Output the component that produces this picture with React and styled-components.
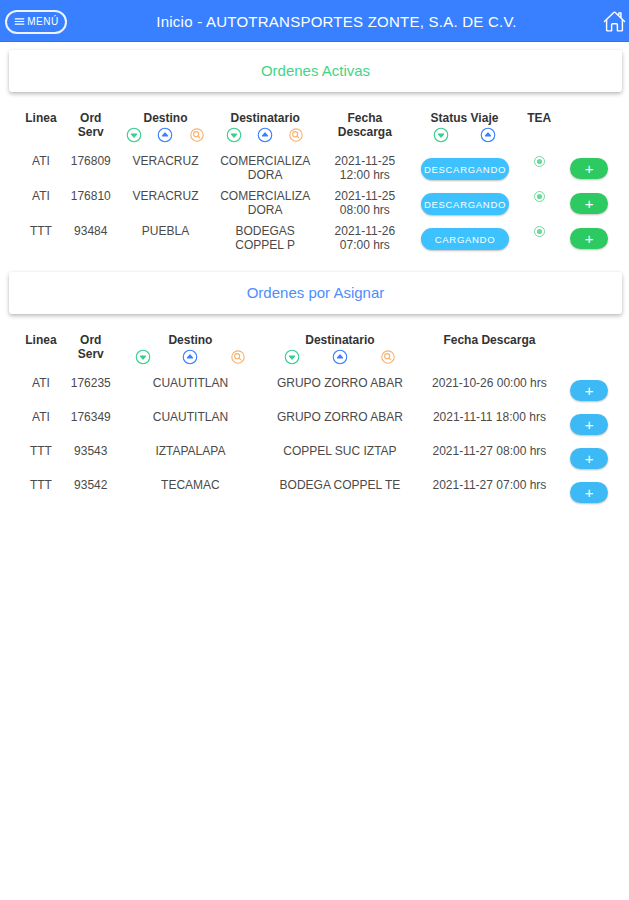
import styled, { createGlobalStyle } from 'styled-components';
import {
  IoCaretDownCircleOutline,
  IoCaretUpCircleOutline,
  IoHomeOutline,
  IoMenu,
  IoSearchCircleOutline,
} from 'react-icons/io5';

const GlobalStyle = createGlobalStyle`
  html, body {
    margin: 0;
    background: #fff;
    font-family: "Liberation Sans", Arial, sans-serif;
  }
`;

const Page = styled.div`
  width: 629px;
  height: 900px;
  overflow: hidden;
  background: #fff;
`;

const Toolbar = styled.header`
  display: flex;
  align-items: center;
  height: 42px;
  padding: 2px 3px 0 5px;
  box-sizing: border-box;
  background: #3880ff;
  border-bottom: 1px solid #2f74ec;
  color: #fff;
`;

const MenuButton = styled.button`
  display: flex;
  align-items: center;
  justify-content: center;
  gap: 1px;
  width: 62px;
  height: 24px;
  padding: 0;
  box-sizing: border-box;
  background: transparent;
  border: 2px solid #eef3ff;
  border-radius: 12px;
  color: #fff;
  font: 400 10px "Liberation Sans", Arial, sans-serif;
  letter-spacing: 0.5px;
`;

const Title = styled.h1`
  flex: 1;
  margin: 0;
  padding-left: 3px;
  text-align: center;
  font-size: 15px;
  font-weight: 400;
  letter-spacing: 0.24px;
`;

const HomeButton = styled.span`
  display: flex;
  font-size: 23px;
`;

const Card = styled.div`
  display: flex;
  align-items: center;
  justify-content: center;
  height: 42px;
  padding-bottom: 2px;
  box-sizing: border-box;
  margin: ${(p) => p.$top}px 7px 0 9px;
  background: #fff;
  border-radius: 3px;
  box-shadow: 0 2px 4px rgba(0, 0, 0, 0.26), 0 0 3px rgba(0, 0, 0, 0.05);
  color: ${(p) => p.$color};
  font-size: 15px;
`;

const Table = styled.section`
  margin: 19px 15px 0 16px;
`;

const Row = styled.div`
  display: grid;
  grid-template-columns: ${(p) => p.$cols};
  height: ${(p) => p.$height}px;
  box-sizing: border-box;
`;

const HeadCell = styled.div`
  padding: 0 ${(p) => p.$inset || 3}px;
  min-width: 0;
  text-align: center;
  font-size: 12px;
  font-weight: 700;
  line-height: 14px;
  color: #333;
`;

const SortIcons = styled.div`
  display: flex;
  justify-content: space-around;
  margin-top: 1px;
  font-size: 18px;
  line-height: 0;
`;

const SortIcon = styled.span`
  display: flex;
  color: ${(p) => p.$color};
`;

const Cell = styled.div`
  padding: 5px ${(p) => p.$inset || 3}px 0;
  min-width: 0;
  text-align: center;
  font-size: 12px;
  line-height: 14px;
  color: #4a4a4a;
  overflow-wrap: anywhere;
`;

const StatusButton = styled.span`
  display: flex;
  align-items: center;
  justify-content: center;
  height: 22px;
  margin: 9px 5px 0 6px;
  border-radius: 11px;
  background: #3dc2ff;
  box-shadow: 0 1px 2px rgba(0, 0, 0, 0.25);
  color: #fff;
  font-size: 9.5px;
  letter-spacing: 0.7px;
  white-space: nowrap;
`;

const AddButton = styled.span`
  display: flex;
  align-items: center;
  justify-content: center;
  width: 38px;
  height: 21px;
  margin: 9px 0 0 6px;
  border-radius: 11px;
  background: ${(p) => p.$color};
  box-shadow: 0 1px 2px rgba(0, 0, 0, 0.25);
  color: #fff;
  font-size: 15px;
  line-height: 1;
`;

const TeaIcon = styled.span`
  display: flex;
  justify-content: center;
  padding-top: 1px;
  color: #6fd89b;
`;

const GREEN = '#35cf8e';
const BLUE = '#3880ff';
const ORANGE = '#f7b26f';

const sortIcons = [
  [IoCaretDownCircleOutline, GREEN],
  [IoCaretUpCircleOutline, BLUE],
  [IoSearchCircleOutline, ORANGE],
];

const Sort = ({ count = 3 }) => (
  <SortIcons>
    {sortIcons.slice(0, count).map(([Icon, color]) => (
      <SortIcon key={color} $color={color}>
        <Icon />
      </SortIcon>
    ))}
  </SortIcons>
);

const RadioOn = () => (
  <svg width="13" height="13" viewBox="0 0 13 13">
    <circle cx="6.5" cy="6.5" r="5" fill="none" stroke="currentColor" strokeWidth="1" />
    <circle cx="6.5" cy="6.5" r="2.6" fill="currentColor" />
  </svg>
);

const activeCols = '1fr 1fr 2fr 2fr 2fr 2fr 1fr 1fr';
const pendingCols = '1fr 1fr 3fr 3fr 3fr 1fr';

const activeOrders = [
  ['ATI', '176809', 'VERACRUZ', 'COMERCIALIZADORA', '2021-11-25 12:00 hrs', 'DESCARGANDO'],
  ['ATI', '176810', 'VERACRUZ', 'COMERCIALIZADORA', '2021-11-25 08:00 hrs', 'DESCARGANDO'],
  ['TTT', '93484', 'PUEBLA', 'BODEGAS COPPEL P', '2021-11-26 07:00 hrs', 'CARGANDO'],
];

const pendingOrders = [
  ['ATI', '176235', 'CUAUTITLAN', 'GRUPO ZORRO ABAR', '2021-10-26 00:00 hrs'],
  ['ATI', '176349', 'CUAUTITLAN', 'GRUPO ZORRO ABAR', '2021-11-11 18:00 hrs'],
  ['TTT', '93543', 'IZTAPALAPA', 'COPPEL SUC IZTAP', '2021-11-27 08:00 hrs'],
  ['TTT', '93542', 'TECAMAC', 'BODEGA COPPEL TE', '2021-11-27 07:00 hrs'],
];

const App = () => (
  <Page>
    <GlobalStyle />
    <Toolbar>
      <MenuButton>
        <IoMenu size={13} />
        MENÚ
      </MenuButton>
      <Title>Inicio - AUTOTRANSPORTES ZONTE, S.A. DE C.V.</Title>
      <HomeButton>
        <IoHomeOutline />
      </HomeButton>
    </Toolbar>

    <Card $top={8} $color="#45d483">Ordenes Activas</Card>
    <Table>
      <Row $cols={activeCols} $height={38}>
        <HeadCell>Linea</HeadCell>
        <HeadCell>Ord<br />Serv</HeadCell>
        <HeadCell>Destino<Sort /></HeadCell>
        <HeadCell>Destinatario<Sort /></HeadCell>
        <HeadCell $inset={14}>Fecha Descarga</HeadCell>
        <HeadCell>Status Viaje<Sort count={2} /></HeadCell>
        <HeadCell>TEA</HeadCell>
        <HeadCell />
      </Row>
      {activeOrders.map(([linea, ord, destino, destinatario, fecha, status]) => (
        <Row key={ord} $cols={activeCols} $height={35}>
          <Cell>{linea}</Cell>
          <Cell>{ord}</Cell>
          <Cell>{destino}</Cell>
          <Cell>{destinatario}</Cell>
          <Cell $inset={14}>{fecha}</Cell>
          <div><StatusButton>{status}</StatusButton></div>
          <Cell><TeaIcon><RadioOn /></TeaIcon></Cell>
          <div><AddButton $color="#2dc961">+</AddButton></div>
        </Row>
      ))}
    </Table>

    <Card $top={18} $color="#4d8dff">Ordenes por Asignar</Card>
    <Table>
      <Row $cols={pendingCols} $height={38}>
        <HeadCell>Linea</HeadCell>
        <HeadCell>Ord<br />Serv</HeadCell>
        <HeadCell>Destino<Sort /></HeadCell>
        <HeadCell>Destinatario<Sort /></HeadCell>
        <HeadCell>Fecha Descarga</HeadCell>
        <HeadCell />
      </Row>
      {pendingOrders.map(([linea, ord, destino, destinatario, fecha]) => (
        <Row key={ord} $cols={pendingCols} $height={34}>
          <Cell>{linea}</Cell>
          <Cell>{ord}</Cell>
          <Cell>{destino}</Cell>
          <Cell>{destinatario}</Cell>
          <Cell>{fecha}</Cell>
          <div><AddButton $color="#3dbaf5">+</AddButton></div>
        </Row>
      ))}
    </Table>
  </Page>
);

export default App;
